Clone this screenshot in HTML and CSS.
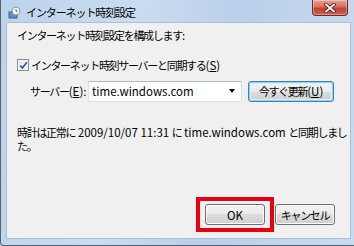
FILE: index.html
```html
<!DOCTYPE html>
<html lang="ja">
<head>
<meta charset="utf-8">
<link rel="stylesheet" href="styles.css">
</head>
<body>
<div class="window">
  <div class="titlebar">
    <svg class="appicon" width="13" height="13" viewBox="0 0 13 13">
      <rect x="1" y="6" width="8" height="6" fill="#5f8fc4" stroke="#3a6394" stroke-width="1"/>
      <circle cx="8" cy="5" r="4" fill="#f4f6f8" stroke="#8a96a3" stroke-width="1"/>
      <path d="M8 3v2.2h1.6" fill="none" stroke="#4a5a6a" stroke-width="0.9"/>
    </svg>
    <span class="title">インターネット時刻設定</span>
    <div class="close">
      <svg width="12" height="10" viewBox="0 0 12 10">
        <path d="M2 1.5L10 8.5M10 1.5L2 8.5" stroke="#4a1515" stroke-width="3.4" stroke-linecap="square"/>
        <path d="M2 1.5L10 8.5M10 1.5L2 8.5" stroke="#ffffff" stroke-width="1.8" stroke-linecap="square"/>
      </svg>
    </div>
  </div>
  <div class="client">
    <p class="heading">インターネット時刻設定を構成します<span class="en">:</span></p>
    <div class="check-row">
      <span class="checkbox">
        <svg width="9" height="9" viewBox="0 0 9 9"><path d="M1.2 4.6L3.4 7L7.8 1.2" fill="none" stroke="#2f4f9a" stroke-width="1.6"/></svg>
      </span>
      <span>インターネット時刻サーバーと同期する<span class="en">(<u>S</u>)</span></span>
    </div>
    <div class="server-row">
      <span class="label">サーバー<span class="en">(<u>E</u>):</span></span>
      <div class="combo"><span class="en">time.windows.com</span><span class="arrow"></span></div>
      <button class="btn btn-default">今すぐ更新<span class="en">(<u>U</u>)</span></button>
    </div>
    <p class="status"><span class="line">時計は正常に<span class="en"> 2009/10/07 11:31 </span>に<span class="en"> time.windows.com </span>と同期しまし</span><br>た。</p>
    <div class="footer">
      <div class="ok-wrap">
        <button class="btn btn-ok"><span class="en">OK</span></button>
        <span class="highlight"></span>
      </div>
      <button class="btn btn-cancel">キャンセル</button>
    </div>
  </div>
</div>
</body>
</html>
```

FILE: styles.css
```css
html, body {
  margin: 0;
  padding: 0;
}
body {
  width: 354px;
  height: 246px;
  overflow: hidden;
  background: #c4d8ee;
}
.window {
  box-sizing: border-box;
  width: 354px;
  height: 246px;
  display: flex;
  flex-direction: column;
  background: linear-gradient(100deg, #bcd3ec 0%, #cadcf0 35%, #b9d0ea 60%, #c9dbef 100%);
  border-left: 1px solid #56616e;
  border-bottom: 1px solid #56616e;
  border-bottom-left-radius: 4px;
  padding: 0 3px 6px 5px;
  font-family: "Noto Sans CJK JP", sans-serif;
  color: #000;
}
.titlebar {
  height: 22px;
  display: flex;
  align-items: flex-start;
  flex: none;
}
.appicon {
  margin: 6px 0 0 2px;
  flex: none;
}
.title {
  margin: 4px 0 0 5px;
  font-size: 11px;
  letter-spacing: -1.1px;
  line-height: 16px;
}
.close {
  margin-left: auto;
  margin-right: 3px;
  width: 36px;
  height: 16px;
  box-sizing: border-box;
  border: 1px solid #6b2a2a;
  border-top: none;
  border-radius: 0 0 4px 4px;
  background: linear-gradient(#e8a393 0%, #d7705f 45%, #c2402c 55%, #d0604a 100%);
  display: flex;
  align-items: center;
  justify-content: center;
  box-shadow: inset 0 0 0 1px rgba(255,255,255,0.35);
}
.client {
  flex: 1;
  display: flex;
  flex-direction: column;
  background: #f0f0f0;
  border: 1px solid #a9bed8;
  padding: 0 15px 13px 10px;
  font-size: 11px;
  letter-spacing: -1.3px;
  line-height: 16px;
}
.en {
  font-size: 11.5px;
  letter-spacing: 0;
}
u {
  text-decoration: underline;
  text-underline-offset: 1px;
}
.heading {
  margin: 4px 0 0 0;
}
.check-row {
  margin-top: 14px;
  display: flex;
  align-items: center;
  height: 16px;
}
.checkbox {
  box-sizing: border-box;
  width: 12px;
  height: 12px;
  margin-right: 2px;
  border: 1px solid #8e8f8f;
  background: linear-gradient(135deg, #dfe6f0, #f8f9fb);
  box-shadow: inset 0 0 0 1px #f4f4f4;
  display: flex;
  align-items: center;
  justify-content: center;
}
.server-row {
  margin-top: 7px;
  display: flex;
  align-items: center;
  height: 22px;
}
.label {
  margin-left: 13px;
  width: 58px;
  flex: none;
}
.combo {
  box-sizing: border-box;
  width: 154px;
  height: 21px;
  flex: none;
  display: flex;
  align-items: center;
  padding: 0 4px 0 3px;
  background: #fff;
  border: 1px solid #dde2e8;
  border-top-color: #b5b9c0;
}
.arrow {
  margin-left: auto;
  margin-right: 2px;
  width: 0;
  height: 0;
  border-left: 3.5px solid transparent;
  border-right: 3.5px solid transparent;
  border-top: 4px solid #000;
}
.btn {
  box-sizing: border-box;
  height: 21px;
  padding: 0;
  font-family: "Noto Sans CJK JP", sans-serif;
  font-size: 11px;
  letter-spacing: -1.3px;
  line-height: 16px;
  color: #000;
  border: 1px solid #707070;
  border-radius: 3px;
  background: linear-gradient(#f2f2f2 0%, #ebebeb 50%, #dddddd 50%, #cfcfcf 100%);
  box-shadow: inset 0 0 0 1px #fbfbfb;
}
.btn-default {
  margin-left: 6px;
  width: 86px;
  border-color: #3c7fb1;
  box-shadow: inset 0 0 0 1px #8fd6f6, inset 0 0 0 2px #d7f0fb;
}
.status {
  margin: 23px 0 0 0;
  line-height: 14px;
}
.status .line {
  white-space: nowrap;
}
.footer {
  margin-top: auto;
  display: flex;
  justify-content: flex-end;
  gap: 10px;
}
.ok-wrap {
  position: relative;
  display: flex;
}
.btn-ok,
.btn-cancel {
  width: 60px;
}
.highlight {
  position: absolute;
  left: -9px;
  right: -9px;
  top: -7px;
  bottom: -7px;
  border: 4px solid #e60012;
  pointer-events: none;
}
```
